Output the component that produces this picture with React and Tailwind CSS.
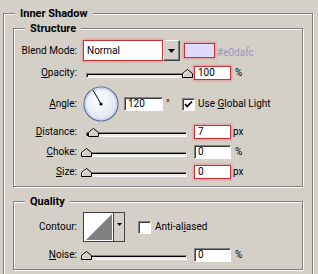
import React from "react";

const sunken =
  "bg-white border border-t-[#808080] border-l-[#808080] border-b-white border-r-white shadow-[inset_1px_1px_0_#404040]";
const redBox =
  "bg-white border border-[#c63238] shadow-[0_0_2px_1px_rgba(235,110,110,0.55)]";
const group =
  "border border-[#808080] shadow-[inset_1px_1px_0_#fff,1px_1px_0_#fff]";
const legend = "ml-[11px] px-[5px] bg-[#d4d0c8] text-[11px] leading-[13px] font-bold";

function Lbl({ a = "", u = "", b = "" }) {
  return (
    <div className="w-[63px] shrink-0 text-right whitespace-nowrap">
      {a}
      {u && <span className="underline underline-offset-[1px]">{u}</span>}
      {b}
    </div>
  );
}

function Thumb() {
  return (
    <svg width="11" height="9" viewBox="0 0 11 9">
      <path d="M0.5 8.5V4.5L5.5 0.5L10.5 4.5V8.5Z" fill="#d4d0c8" stroke="#000" />
      <path d="M1.5 7.5V5L5.5 1.8" stroke="#fff" fill="none" />
    </svg>
  );
}

function Slider({ pct }) {
  return (
    <div className="relative ml-[5px] w-[109px] h-[14px] shrink-0 px-[4px] pt-[7px]">
      <div className="h-[5px] border border-t-[#808080] border-l-[#808080] border-b-white border-r-white">
        <div className="h-full border-t border-l border-black bg-[#ecebe6]" />
      </div>
      <div className="absolute top-[3px] leading-none" style={{ left: 4 + pct * 101 - 5 }}>
        <Thumb />
      </div>
    </div>
  );
}

function Field({ v, red, w = "w-[37px]", ml = "ml-[3px]" }) {
  return (
    <div className={`${red ? redBox : sunken} ${w} ${ml} h-[14px] pl-[3px] flex items-center shrink-0`}>
      {v}
    </div>
  );
}

function Check({ on }) {
  return (
    <div className="w-[13px] h-[13px] shrink-0 bg-white border border-t-[#808080] border-l-[#808080] border-b-white border-r-white shadow-[inset_1px_1px_0_#404040]">
      {on && (
        <svg width="11" height="11" viewBox="0 0 11 11">
          <polyline points="2,5 4.2,7.5 9,2.5" fill="none" stroke="#000" strokeWidth="1.8" />
        </svg>
      )}
    </div>
  );
}

function Dial() {
  return (
    <svg width="36" height="36" viewBox="0 0 36 36" className="ml-[6px] shrink-0">
      <defs>
        <radialGradient id="dg" cx="45%" cy="40%" r="60%">
          <stop offset="0" stopColor="#ffffff" />
          <stop offset="1" stopColor="#dde3ee" />
        </radialGradient>
      </defs>
      <circle cx="18" cy="18" r="17" fill="url(#dg)" stroke="#5f739f" strokeWidth="1.2" />
      <circle cx="18" cy="18" r="15.6" fill="none" stroke="#c9d1e2" strokeWidth="1" />
      <line x1="18" y1="18" x2="10" y2="4" stroke="#000" strokeWidth="1" />
      <circle cx="18" cy="18" r="1.6" fill="#000" />
    </svg>
  );
}

function Contour() {
  return (
    <div className="ml-[6px] w-[42px] h-[30px] shrink-0 border border-[#404040]">
      <svg width="40" height="28" viewBox="0 0 40 28">
        <rect x="0" y="0" width="29" height="28" fill="#fff" />
        <polygon points="2,27 28,1 28,27" fill="#808080" />
        <rect x="29" y="0" width="11" height="28" fill="#d4d0c8" />
        <line x1="29.5" y1="0" x2="29.5" y2="28" stroke="#404040" />
        <polygon points="33,10 38,10 35.5,13" fill="#000" />
      </svg>
    </div>
  );
}

export default function App() {
  return (
    <div className="w-[318px] h-[274px] overflow-hidden bg-[#d4d0c8] pl-[3px] pt-[7px] font-[Roboto,Arial,sans-serif] text-[10px] leading-[12px] text-black">
      <fieldset className={`w-[310px] ${group}`}>
        <legend className={legend}>Inner Shadow</legend>
        <div className="px-[9px] pt-[2px] pb-[20px]">
          {/* Structure */}
          <fieldset className={group}>
            <legend className={legend}>Structure</legend>
            <div className="flex flex-col pb-[7px]">
              <div className="mt-[4px] h-[23px] flex items-center">
                <Lbl a="Blend Mode:" />
                <div className="ml-[6px] flex items-center">
                  <div className={`${redBox} w-[80px] h-[21px] pl-[3px] flex items-center text-[10px]`}>
                    Normal
                  </div>
                  <div className="w-[17px] h-[21px] bg-[#d4d0c8] border border-t-white border-l-white border-b-[#404040] border-r-[#404040] shadow-[inset_-1px_-1px_0_#808080] flex items-center justify-center">
                    <svg width="7" height="4" viewBox="0 0 7 4">
                      <polygon points="0,0 7,0 3.5,4" fill="#000" />
                    </svg>
                  </div>
                </div>
                <div className="ml-[4px] w-[31px] h-[15px] bg-[#e0dafc] border border-[#c63238] shadow-[0_0_2px_1px_rgba(235,110,110,0.55)]" />
                <div className="ml-[2px] mt-[5px] text-[#9896bd]">#e0dafc</div>
              </div>

              <div className="mt-[4px] h-[14px] flex items-center">
                <Lbl u="O" b="pacity:" />
                <Slider pct={1} />
                <Field v="100" red />
                <span className="ml-[4px]">%</span>
              </div>

              <div className="mt-[6px] h-[36px] flex items-center">
                <Lbl u="A" b="ngle:" />
                <Dial />
                <Field v="120" w="w-[39px]" ml="ml-[5px]" />
                <span className="ml-[3px] w-[16px] self-start mt-[12px] text-black">°</span>
                <Check on />
                <span className="ml-[3px]">
                  Use <span className="underline underline-offset-[1px]">G</span>lobal Light
                </span>
              </div>

              <div className="mt-[3px] h-[14px] flex items-center">
                <Lbl u="D" b="istance:" />
                <Slider pct={0.07} />
                <Field v="7" red />
                <span className="ml-[2px]">px</span>
              </div>

              <div className="mt-[6px] h-[14px] flex items-center">
                <Lbl u="C" b="hoke:" />
                <Slider pct={0} />
                <Field v="0" />
                <span className="ml-[4px]">%</span>
              </div>

              <div className="mt-[6px] h-[14px] flex items-center">
                <Lbl u="S" b="ize:" />
                <Slider pct={0} />
                <Field v="0" red />
                <span className="ml-[2px]">px</span>
              </div>
            </div>
          </fieldset>

          {/* Quality */}
          <fieldset className={`mt-[8px] ${group}`}>
            <legend className={legend}>Quality</legend>
            <div className="flex flex-col pb-[7px]">
              <div className="mt-[4px] h-[30px] flex items-center">
                <Lbl a="Contour:" />
                <Contour />
                <div className="ml-[13px]">
                  <Check />
                </div>
                <span className="ml-[4px]">
                  Anti-al<span className="underline underline-offset-[1px]">i</span>ased
                </span>
              </div>

              <div className="mt-[6px] h-[14px] flex items-center">
                <Lbl u="N" b="oise:" />
                <Slider pct={0} />
                <Field v="0" />
                <span className="ml-[4px]">%</span>
              </div>
            </div>
          </fieldset>
        </div>
      </fieldset>
    </div>
  );
}
